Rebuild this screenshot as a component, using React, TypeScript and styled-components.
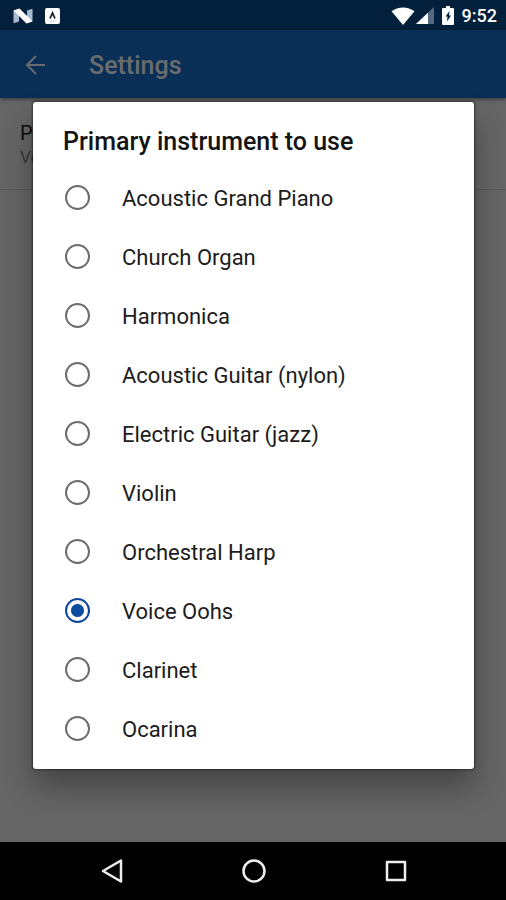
import React, { useState } from "react";
import styled, { createGlobalStyle } from "styled-components";

const GlobalStyle = createGlobalStyle`
  *, *::before, *::after { box-sizing: border-box; }
  body {
    margin: 0;
    background: #000;
    font-family: Roboto, "Noto Sans", sans-serif;
  }
`;

const Screen = styled.div`
  position: relative;
  display: flex;
  flex-direction: column;
  min-height: 100vh;
  background: #656565;
`;

const StatusBar = styled.div`
  display: flex;
  align-items: center;
  justify-content: space-between;
  height: 30px;
  padding: 1px 9px 0 13px;
  background: #02203b;
  color: #fff;
`;

const StatusGroup = styled.div<{ $gap: number }>`
  display: flex;
  align-items: center;
  gap: ${(p) => p.$gap}px;
`;

const Clock = styled.time`
  font-size: 18px;
  line-height: 30px;
  font-weight: 500;
`;

const AppBar = styled.header`
  display: flex;
  align-items: center;
  gap: 42px;
  height: 68px;
  padding: 4px 24px 0;
  background: #0a2f56;
  color: #6a6c6f;
  box-shadow: 0 1px 4px rgba(0, 0, 0, 0.5);
`;

const IconButton = styled.button`
  display: flex;
  padding: 0;
  border: 0;
  background: none;
  color: inherit;
`;

const PageTitle = styled.h1`
  margin: 0;
  font-size: 25px;
  line-height: 32px;
  font-weight: 500;
`;

const Content = styled.main`
  flex: 1;
`;

const Preference = styled.section`
  height: 92px;
  padding: 23px 20px 0;
  border-bottom: 1px solid #565656;
`;

const PreferenceTitle = styled.div`
  font-size: 20px;
  line-height: 24px;
  color: #0c0c0c;
`;

const PreferenceValue = styled.div`
  font-size: 17px;
  line-height: 24px;
  color: #343434;
`;

const Overlay = styled.div`
  position: absolute;
  inset: 30px 0 59px;
  display: flex;
  align-items: center;
  padding: 0 32px 0 33px;
`;

const Dialog = styled.form`
  flex: 1;
  padding: 22px 0 11px;
  border-radius: 3px;
  background: #fff;
  box-shadow: 0 0 2px 1px rgba(0, 0, 0, 0.45), 0 18px 30px rgba(0, 0, 0, 0.32);
`;

const DialogTitle = styled.h2`
  margin: 0;
  padding: 0 30px 8px;
  font-size: 25px;
  line-height: 36px;
  font-weight: 500;
  color: #141414;
`;

const Options = styled.div`
  display: flex;
  flex-direction: column;
`;

const Option = styled.label`
  display: flex;
  align-items: center;
  gap: 32px;
  height: 59px;
  padding: 0 32px;
  font-size: 22px;
  line-height: 28px;
  color: #1c1c1c;
`;

const OptionText = styled.span`
  padding-top: 2px;
`;

const Radio = styled.input`
  appearance: none;
  flex: none;
  width: 25px;
  height: 25px;
  margin: 0;
  border: 2px solid #6c6c6c;
  border-radius: 50%;

  &:checked {
    border-color: #0c449c;
    background: radial-gradient(circle, #0c4da2 6px, transparent 7px);
  }
`;

const NavBar = styled.nav`
  display: flex;
  align-items: center;
  justify-content: center;
  gap: 116px;
  height: 58px;
  padding-left: 1px;
  background: #000;
  color: #eee;
`;

const instruments = [
  "Acoustic Grand Piano",
  "Church Organ",
  "Harmonica",
  "Acoustic Guitar (nylon)",
  "Electric Guitar (jazz)",
  "Violin",
  "Orchestral Harp",
  "Voice Oohs",
  "Clarinet",
  "Ocarina",
];

const NougatIcon = () => (
  <svg width="20" height="16" viewBox="0 0 20 16" aria-hidden="true">
    <path d="M.5 2.500 6 .8V13.500L.5 15.200z" fill="#a9b9cf" />
    <path d="M14 2.500 19.500 .800V13.500L14 15.200z" fill="#a9b9cf" />
    <path d="M.5 2.500 6.500 .400 19.500 13.200 13.500 15.600z" fill="#fff" />
  </svg>
);

const KeyboardIcon = () => (
  <svg width="15" height="16" viewBox="0 0 15 16" aria-hidden="true">
    <rect width="15" height="16" rx="2" fill="#fff" />
    <path d="M5 10.500 7.500 5 10 10.500" fill="none" stroke="#18232f" strokeWidth="1.800" />
    <path d="M4.500 13h6" stroke="#c4cad0" />
  </svg>
);

const WifiIcon = () => (
  <svg width="24" height="18" viewBox="0 0 24 18" aria-hidden="true">
    <path d="M.500 4.200C7-.900 17-.900 23.500 4.200L12 18z" fill="#fff" />
  </svg>
);

const SignalIcon = () => (
  <svg width="18" height="17" viewBox="0 0 18 17" aria-hidden="true">
    <path d="M0 17 18 0V17z" fill="#536a80" />
    <path d="M0 17 12 5.700V17z" fill="#fff" />
  </svg>
);

const BatteryIcon = () => (
  <svg width="12" height="19" viewBox="0 0 12 19" aria-hidden="true">
    <path d="M4 0h4v2h3a1 1 0 0 1 1 1v15a1 1 0 0 1-1 1H1a1 1 0 0 1-1-1V3a1 1 0 0 1 1-1h3z" fill="#fff" />
    <path d="M7.500 5 3.500 10.500H5.500L5 15.500 9 9.500H7z" fill="#02203b" />
  </svg>
);

const ArrowIcon = () => (
  <svg width="23" height="22" viewBox="0 0 23 22" fill="none" stroke="currentColor" strokeWidth="2" aria-hidden="true">
    <path d="M21 10H3M12 1 3 10l9 9" />
  </svg>
);

const BackIcon = () => (
  <svg width="26" height="26" viewBox="0 0 26 26" fill="none" stroke="currentColor" strokeWidth="2.500" strokeLinejoin="round" aria-hidden="true">
    <path d="M22 2.500V23.500L4 13z" />
  </svg>
);

const HomeIcon = () => (
  <svg width="26" height="26" viewBox="0 0 26 26" fill="none" stroke="currentColor" strokeWidth="2.500" aria-hidden="true">
    <circle cx="13" cy="13" r="10.500" />
  </svg>
);

const RecentsIcon = () => (
  <svg width="26" height="26" viewBox="0 0 26 26" fill="none" stroke="currentColor" strokeWidth="2.500" strokeLinejoin="round" aria-hidden="true">
    <rect x="4" y="4" width="18" height="18" />
  </svg>
);

export default function App() {
  const [selected, setSelected] = useState("Voice Oohs");

  return (
    <>
      <GlobalStyle />
      <Screen>
        <StatusBar>
          <StatusGroup $gap={12}>
            <NougatIcon />
            <KeyboardIcon />
          </StatusGroup>
          <StatusGroup $gap={8}>
            <StatusGroup $gap={1}>
              <WifiIcon />
              <SignalIcon />
            </StatusGroup>
            <BatteryIcon />
            <Clock>9:52</Clock>
          </StatusGroup>
        </StatusBar>
        <AppBar>
          <IconButton type="button" aria-label="Navigate up">
            <ArrowIcon />
          </IconButton>
          <PageTitle>Settings</PageTitle>
        </AppBar>
        <Content>
          <Preference>
            <PreferenceTitle>Primary instrument to use</PreferenceTitle>
            <PreferenceValue>{selected}</PreferenceValue>
          </Preference>
        </Content>
        <NavBar>
          <IconButton type="button" aria-label="Back">
            <BackIcon />
          </IconButton>
          <IconButton type="button" aria-label="Home">
            <HomeIcon />
          </IconButton>
          <IconButton type="button" aria-label="Recent apps">
            <RecentsIcon />
          </IconButton>
        </NavBar>
        <Overlay>
          <Dialog role="dialog" aria-labelledby="dialog-title">
            <DialogTitle id="dialog-title">Primary instrument to use</DialogTitle>
            <Options role="radiogroup" aria-labelledby="dialog-title">
              {instruments.map((name) => (
                <Option key={name}>
                  <Radio
                    type="radio"
                    name="instrument"
                    value={name}
                    checked={selected === name}
                    onChange={() => setSelected(name)}
                  />
                  <OptionText>{name}</OptionText>
                </Option>
              ))}
            </Options>
          </Dialog>
        </Overlay>
      </Screen>
    </>
  );
}
